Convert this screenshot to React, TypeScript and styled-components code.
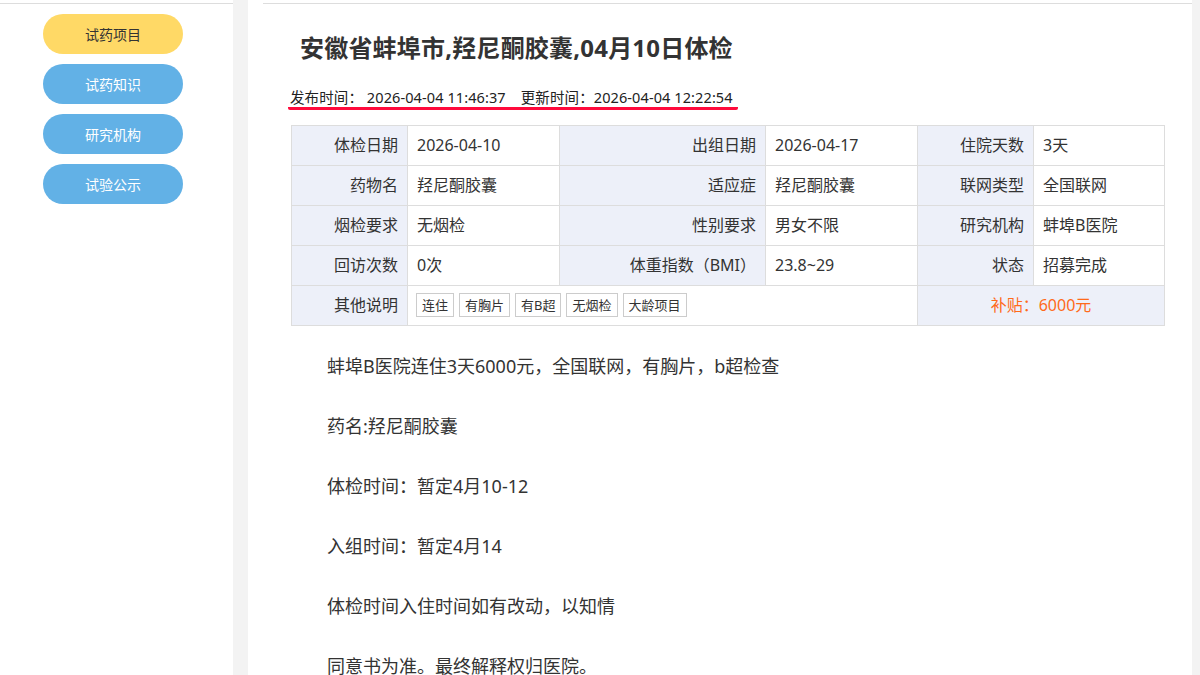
import React from 'react'
import styled, { createGlobalStyle } from 'styled-components'

const GlobalStyle = createGlobalStyle`
  html, body {
    margin: 0;
    padding: 0;
    background: #f3f3f3;
    font-family: 'Noto Sans', 'Noto Sans CJK SC', sans-serif;
    color: #333;
  }
  * {
    box-sizing: border-box;
  }
`

const Page = styled.div`
  display: flex;
  align-items: stretch;
  min-height: 100vh;
  height: 675px;
  overflow: hidden;
`

const Sidebar = styled.aside`
  width: 233px;
  flex-shrink: 0;
  background: #fff;
  padding-top: 3px;
`

const Nav = styled.nav`
  border-top: 1px solid #ddd;
  padding: 10px 0 0 43px;
  display: flex;
  flex-direction: column;
  gap: 10px;
`

const NavButton = styled.a<{ $active?: boolean }>`
  display: flex;
  align-items: center;
  justify-content: center;
  width: 140px;
  height: 40px;
  border-radius: 20px;
  font-size: 14px;
  text-decoration: none;
  background: ${({ $active }) => ($active ? '#ffd966' : '#62b1e6')};
  color: ${({ $active }) => ($active ? '#333' : '#fff')};
`

const Main = styled.main`
  width: 944px;
  margin-left: 15px;
  flex-shrink: 0;
  background: #fff;
  padding: 3px 0 0 15px;
`

const Article = styled.article`
  border-top: 1px solid #ddd;
  padding: 26px 27px 0 28px;
`

const Title = styled.h1`
  margin: 0;
  padding-left: 9px;
  font-size: 24px;
  line-height: 36px;
  font-weight: 700;
  letter-spacing: 0.2px;
  color: #333;
`

const Meta = styled.div`
  display: inline-block;
  margin-top: 21px;
  margin-left: -3px;
  padding: 0 5px 0 2px;
  font-size: 14.5px;
  letter-spacing: 0.1px;
  line-height: 20px;
  color: #222;
  border-bottom: 3px solid #ff0a3c;
  border-radius: 2px;
`

const MetaItem = styled.span`
  & + & {
    margin-left: 15px;
  }
`

const InfoTable = styled.table`
  width: 873px;
  margin-top: 15px;
  border-collapse: collapse;
  table-layout: fixed;
  font-size: 16px;
`

const Cell = styled.td<{ $label?: boolean; $center?: boolean }>`
  height: 40px;
  border: 1px solid #ddd;
  padding: 0 9px 1px;
  line-height: 20px;
  white-space: nowrap;
  background: ${({ $label }) => ($label ? '#edf0f9' : '#fff')};
  text-align: ${({ $label, $center }) => ($center ? 'center' : $label ? 'right' : 'left')};
  color: #333;
`

const Subsidy = styled.span`
  color: #ff6a1a;
`

const Tags = styled.div`
  display: flex;
  gap: 5px;
  margin-left: -1px;
`

const Tag = styled.span`
  display: inline-block;
  height: 24px;
  line-height: 22px;
  padding: 0 5px;
  border: 1px solid #ccc;
  font-size: 13px;
  color: #333;
`

const Body = styled.div`
  margin-top: 25px;
  font-size: 18px;
  color: #333;
`

const Para = styled.p`
  margin: 0 0 30px;
  line-height: 30px;
  text-indent: 2em;
`

const rows: [string, string, string, string, string, string][] = [
  ['体检日期', '2026-04-10', '出组日期', '2026-04-17', '住院天数', '3天'],
  ['药物名', '羟尼酮胶囊', '适应症', '羟尼酮胶囊', '联网类型', '全国联网'],
  ['烟检要求', '无烟检', '性别要求', '男女不限', '研究机构', '蚌埠B医院'],
  ['回访次数', '0次', '体重指数（BMI）', '23.8~29', '状态', '招募完成'],
]

const tags = ['连住', '有胸片', '有B超', '无烟检', '大龄项目']

const paragraphs = [
  '蚌埠B医院连住3天6000元，全国联网，有胸片，b超检查',
  '药名:羟尼酮胶囊',
  '体检时间：暂定4月10-12',
  '入组时间：暂定4月14',
  '体检时间入住时间如有改动，以知情',
  '同意书为准。最终解释权归医院。',
]

const navItems = ['试药项目', '试药知识', '研究机构', '试验公示']

export default function App() {
  return (
    <>
      <GlobalStyle />
      <Page>
        <Sidebar>
          <Nav>
            {navItems.map((item, i) => (
              <NavButton key={item} $active={i === 0}>
                {item}
              </NavButton>
            ))}
          </Nav>
        </Sidebar>
        <Main>
          <Article>
            <Title>安徽省蚌埠市,羟尼酮胶囊,04月10日体检</Title>
            <Meta>
              <MetaItem>发布时间： 2026-04-04 11:46:37</MetaItem>
              <MetaItem>更新时间：2026-04-04 12:22:54</MetaItem>
            </Meta>
            <InfoTable>
              <colgroup>
                <col style={{ width: 116 }} />
                <col style={{ width: 152 }} />
                <col style={{ width: 206 }} />
                <col style={{ width: 152 }} />
                <col style={{ width: 116 }} />
                <col style={{ width: 131 }} />
              </colgroup>
              <tbody>
                {rows.map((r) => (
                  <tr key={r[0]}>
                    <Cell $label>{r[0]}</Cell>
                    <Cell>{r[1]}</Cell>
                    <Cell $label>{r[2]}</Cell>
                    <Cell>{r[3]}</Cell>
                    <Cell $label>{r[4]}</Cell>
                    <Cell>{r[5]}</Cell>
                  </tr>
                ))}
                <tr>
                  <Cell $label>其他说明</Cell>
                  <Cell colSpan={3}>
                    <Tags>
                      {tags.map((t) => (
                        <Tag key={t}>{t}</Tag>
                      ))}
                    </Tags>
                  </Cell>
                  <Cell $label $center colSpan={2}>
                    <Subsidy>补贴：6000元</Subsidy>
                  </Cell>
                </tr>
              </tbody>
            </InfoTable>
            <Body>
              {paragraphs.map((p) => (
                <Para key={p}>{p}</Para>
              ))}
            </Body>
          </Article>
        </Main>
      </Page>
    </>
  )
}
